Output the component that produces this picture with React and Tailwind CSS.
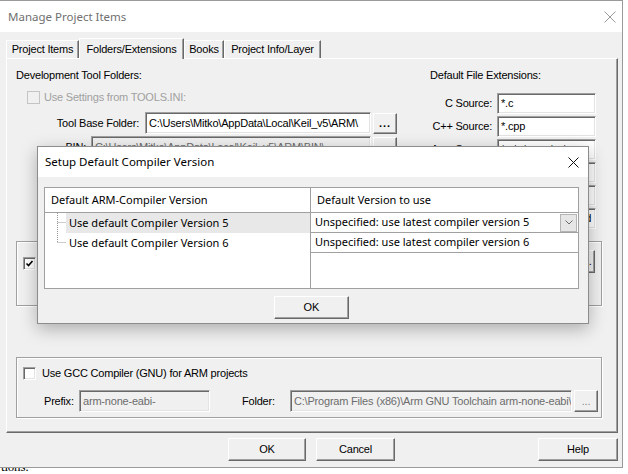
import React from "react";

// classic win32 3D edges
const raised =
  "border border-t-white border-l-white border-b-[#696969] border-r-[#696969] shadow-[inset_-1px_-1px_0_#a0a0a0]";
const sunken =
  "border border-t-[#a0a0a0] border-l-[#a0a0a0] border-b-white border-r-white shadow-[inset_1px_1px_0_#696969,inset_-1px_-1px_0_#e3e3e3]";
const etched = "border border-[#a0a0a0] shadow-[inset_1px_1px_0_white,1px_1px_0_white]";

const Field = ({ value, className, disabled }) => (
  <div
    className={`${className} ${sunken} ${
      disabled ? "bg-[#f0f0f0] text-[#6d6d6d]" : "bg-white text-black"
    } flex items-center pl-[3px] overflow-hidden whitespace-nowrap shrink-0`}
  >
    {value}
  </div>
);

const Btn = ({ children, className }) => (
  <div className={`${className} ${raised} bg-[#f0f0f0] flex items-center justify-center shrink-0`}>
    {children}
  </div>
);

const Check = ({ checked, disabled }) => (
  <div
    className={`w-[13px] h-[13px] shrink-0 flex items-center justify-center ${
      disabled
        ? "border border-[#c4c4c4] bg-[#f0f0f0]"
        : "border border-t-[#a0a0a0] border-l-[#a0a0a0] border-b-white border-r-white shadow-[inset_1px_1px_0_#696969,inset_-1px_-1px_0_#e3e3e3] bg-white"
    }`}
  >
    {checked && (
      <svg width="9" height="9" viewBox="0 0 9 9">
        <path d="M1.5 4.5 L3.5 6.5 L7.5 2" fill="none" stroke="#000" strokeWidth="1.6" />
      </svg>
    )}
  </div>
);

const CloseX = () => (
  <svg width="11" height="11" viewBox="0 0 11 11">
    <path d="M0.5 0.5 L10.5 10.5 M10.5 0.5 L0.5 10.5" stroke="#111" strokeWidth="1" />
  </svg>
);

const extensions = [
  ["C Source:", "*.c"],
  ["C++ Source:", "*.cpp"],
  ["Asm Source:", "*.s*; *.src; *.a*"],
  ["Object:", "*.obj; *.o"],
  ["Library:", "*.lib"],
  ["Document:", "*.txt; *.h; *.inc; *.md"],
];

const tabs = [
  { label: "Project Items", w: "w-[73px]" },
  { label: "Folders/Extensions", w: "w-[105px]", active: true },
  { label: "Books", w: "w-[40px]" },
  { label: "Project Info/Layer", w: "w-[97px]" },
];

function CompilerDialog() {
  return (
    <div className="absolute left-[37px] top-[146px] w-[552px] h-[178px] border border-[#8c8c8c] bg-[#f0f0f0] shadow-[0_5px_16px_rgba(0,0,0,0.28)] flex flex-col font-['Noto_Sans',sans-serif] text-[11px] tracking-normal text-black z-10">
      {/* title bar */}
      <div className="h-[30px] bg-white flex items-center justify-between pl-[7px] pr-[9px] shrink-0">
        <span className="text-[11.5px]">Setup Default Compiler Version</span>
        <CloseX />
      </div>

      <div className="flex flex-col pl-[6px] pt-[10px]">
        {/* list view */}
        <div className="w-[535px] h-[102px] border border-[#a0a0a0] bg-white flex">
          {/* left column */}
          <div className="w-[266px] border-r border-[#a0a0a0] flex flex-col">
            <div className="h-[25px] border-b border-[#a0a0a0] flex items-center pl-[6px]">
              Default ARM-Compiler Version
            </div>
            <div className="flex">
              <svg width="21" height="40" viewBox="0 0 21 40" className="shrink-0">
                <path
                  d="M12.5 0 V29.5 M12.5 9.5 H22 M12.5 29.5 H22"
                  stroke="#9a9a9a"
                  strokeWidth="1"
                  strokeDasharray="1 1"
                  fill="none"
                />
              </svg>
              <div className="flex-1 flex flex-col">
                <div className="h-[20px] bg-[#e8e8e8] flex items-center pl-[3px]">
                  Use default Compiler Version 5
                </div>
                <div className="h-[20px] flex items-center pl-[3px]">Use default Compiler Version 6</div>
              </div>
            </div>
          </div>
          {/* right column */}
          <div className="flex-1 flex flex-col">
            <div className="h-[25px] border-b border-[#a0a0a0] flex items-center pl-[6px]">
              Default Version to use
            </div>
            <div className="h-[20px] border-b border-[#a0a0a0] flex items-center justify-between pl-[4px] pr-[1px]">
              <span>Unspecified: use latest compiler version 5</span>
              <div className="w-[17px] h-[18px] border border-[#b4b4b4] bg-[#e6e6e6] flex items-center justify-center">
                <svg width="8" height="5" viewBox="0 0 8 5">
                  <path d="M0.5 0.5 L4 4 L7.5 0.5" stroke="#6d6d6d" fill="none" strokeWidth="1" />
                </svg>
              </div>
            </div>
            <div className="h-[20px] border-b border-[#a0a0a0] flex items-center pl-[4px]">
              Unspecified: use latest compiler version 6
            </div>
          </div>
        </div>

        <Btn className="w-[75px] h-[23px] mt-[7px] ml-[230px] font-['Liberation_Sans',sans-serif]">
          OK
        </Btn>
      </div>
    </div>
  );
}

export default function App() {
  return (
    <div className="w-[628px] h-[474px] bg-white relative overflow-hidden font-['Liberation_Sans',sans-serif] text-[11px] tracking-[-0.2px] text-black">
      <div className="w-[623px] h-[468px] border-t border-r border-b border-[#9a9a9a] bg-[#f0f0f0] flex flex-col">
        {/* title bar */}
        <div className="h-[31px] bg-white flex items-center justify-between pl-[8px] pr-[6px] shrink-0 font-['Noto_Sans',sans-serif] text-[11.5px] tracking-normal text-[#707070]">
          <span>Manage Project Items</span>
          <svg width="12" height="12" viewBox="0 0 12 12">
            <path d="M0.5 0.5 L11.5 11.5 M11.5 0.5 L0.5 11.5" stroke="#9a9a9a" strokeWidth="1" />
          </svg>
        </div>

        {/* tabs */}
        <div className="flex items-end h-[20px] mt-[6px] ml-[6px] relative z-[1]">
          {tabs.map((t) =>
            t.active ? (
              <div
                key={t.label}
                className={`${t.w} h-[21px] -mb-[1px] border border-b-0 border-t-white border-l-white border-r-[#696969] shadow-[inset_-1px_0_0_#a0a0a0] bg-[#f0f0f0] flex items-start justify-center pt-[2px]`}
              >
                {t.label}
              </div>
            ) : (
              <div
                key={t.label}
                className={`${t.w} h-[18px] border border-b-0 border-t-white border-l-white border-r-[#696969] shadow-[inset_-1px_0_0_#a0a0a0] flex items-center justify-center`}
              >
                {t.label}
              </div>
            )
          )}
        </div>

        {/* tab panel */}
        <div className="ml-[6px] w-[612px] h-[375px] border border-t-white border-l-white border-b-[#696969] border-r-[#696969] shadow-[inset_-1px_-1px_0_#a0a0a0] pl-[9px] pt-[9px] flex flex-col shrink-0">
          <div className="flex items-start h-[173px]">
            {/* tool folders */}
            <div className="w-[390px] flex flex-col">
              <div className="h-[14px] leading-[14px]">Development Tool Folders:</div>
              <div className="h-[14px] mt-[8px] ml-[11px] flex items-center">
                <Check disabled />
                <span className="ml-[4px] text-[#a0a0a0]">Use Settings from TOOLS.INI:</span>
              </div>
              <div className="h-[22px] mt-[8px] flex items-center">
                <span className="w-[123px] text-right">Tool Base Folder:</span>
                <Field className="ml-[6px] w-[226px] h-[22px]" value="C:\Users\Mitko\AppData\Local\Keil_v5\ARM\" />
                <Btn className="ml-[2px] w-[24px] h-[21px] font-bold tracking-[1px]">...</Btn>
              </div>
              <div className="h-[22px] mt-[2px] flex items-center">
                <span className="w-[70px] text-right">BIN:</span>
                <Field
                  disabled
                  className="ml-[5px] w-[280px] h-[22px]"
                  value="C:\Users\Mitko\AppData\Local\Keil_v5\ARM\BIN\"
                />
                <Btn className="ml-[2px] w-[24px] h-[21px] font-bold tracking-[1px]">...</Btn>
              </div>
            </div>

            {/* extensions */}
            <div className="ml-[24px] flex flex-col">
              <div className="h-[14px] leading-[14px]">Default File Extensions:</div>
              <div className="mt-[11px] flex flex-col gap-[2px]">
                {extensions.map(([label, value]) => (
                  <div key={label} className="h-[21px] flex items-center">
                    <span className="w-[62px] text-right whitespace-nowrap">{label}</span>
                    <Field className="ml-[5px] w-[99px] h-[21px]" value={value} />
                  </div>
                ))}
              </div>
            </div>
          </div>

          {/* ARM compiler group */}
          <div className={`w-[586px] h-[65px] ${etched} flex items-start justify-between pl-[6px] pr-[6px]`}>
            <div className="mt-[13px] flex items-center">
              <Check checked />
              <span className="ml-[6px]">Use ARM Compiler</span>
            </div>
            <Btn className="mt-[8px] w-[150px] h-[23px]">Setup Default ARM Compiler...</Btn>
          </div>

          {/* GCC group */}
          <div className={`mt-[51px] w-[586px] h-[61px] ${etched} flex flex-col pl-[6px] pt-[9px]`}>
            <div className="h-[13px] flex items-center">
              <Check />
              <span className="ml-[6px]">Use GCC Compiler (GNU) for ARM projects</span>
            </div>
            <div className="mt-[10px] flex items-center">
              <span className="ml-[21px] w-[35px]">Prefix:</span>
              <Field disabled className="w-[131px] h-[22px]" value="arm-none-eabi-" />
              <span className="ml-[32px] w-[48px]">Folder:</span>
              <Field
                disabled
                className="w-[282px] h-[22px]"
                value="C:\Program Files (x86)\Arm GNU Toolchain arm-none-eabi\"
              />
              <Btn className="ml-[2px] w-[24px] h-[22px] text-[#8a8a8a]">...</Btn>
            </div>
          </div>
        </div>

        {/* dialog buttons */}
        <div className="flex items-center mt-[5px]">
          <Btn className="ml-[228px] w-[78px] h-[23px]">OK</Btn>
          <Btn className="ml-[10px] w-[79px] h-[23px]">Cancel</Btn>
          <Btn className="ml-[143px] w-[80px] h-[23px]">Help</Btn>
        </div>
      </div>

      <div className="h-[6px] overflow-hidden pl-[1px]">
        <div className="-mt-[8px] text-[13px] leading-[14px] font-['Liberation_Serif',serif]">tions:</div>
      </div>

      <CompilerDialog />
    </div>
  );
}
